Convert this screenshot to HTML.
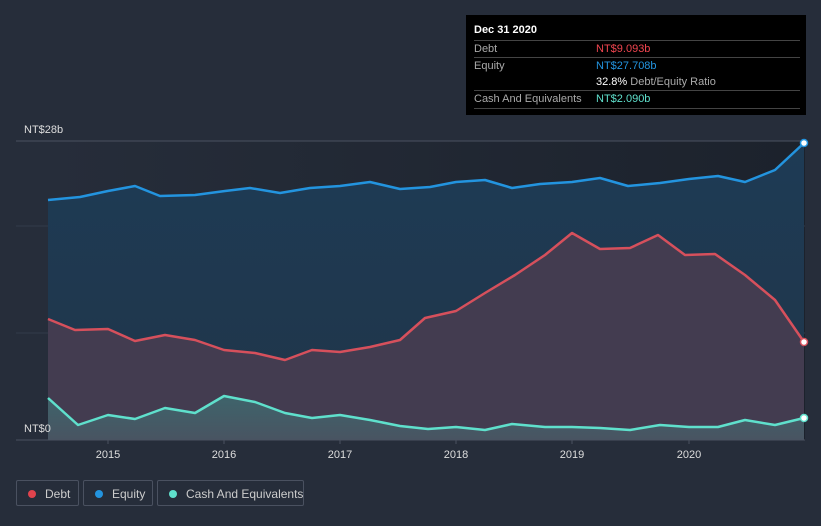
<!DOCTYPE html>
<html><head><style>
body{margin:0;background:#262d3a;font-family:"Liberation Sans",sans-serif;width:821px;height:526px;overflow:hidden;position:relative}
.tt{position:absolute;left:466px;top:15px;width:340px;height:100px;background:#000;color:#fff;font-size:11px}
.tt .r{position:absolute;left:8px;right:6px;border-top:1px solid #444;height:17px;line-height:17px;color:#aaa}
.tt .v{position:absolute;left:122px}
.lg{position:absolute;top:480px;height:26px;border:1px solid #4a5160;border-radius:2px;color:#ccc;font-size:12px;line-height:26px;box-sizing:border-box;white-space:nowrap}
.lg i{position:absolute;left:11px;top:9px;width:8px;height:8px;border-radius:50%}
</style></head><body>
<svg width="821" height="526" style="position:absolute;left:0;top:0">
<defs><linearGradient id="g" x1="0" y1="0" x2="0" y2="1"><stop offset="0" stop-color="#1e3b55"/><stop offset="1" stop-color="#203549"/></linearGradient>
<linearGradient id="bg" x1="0" y1="0" x2="1" y2="0"><stop offset="0" stop-color="#262d3a"/><stop offset="1" stop-color="#1c222c"/></linearGradient>
<linearGradient id="c" x1="0" y1="0" x2="0" y2="1"><stop offset="0" stop-color="#3d6e72"/><stop offset="1" stop-color="#4a5a66"/></linearGradient></defs>
<rect x="48" y="141" width="757" height="299" fill="url(#bg)"/>
<line x1="16" y1="141" x2="805" y2="141" stroke="#4a5160"/>
<line x1="16" y1="226" x2="805" y2="226" stroke="#333c4a"/>
<line x1="16" y1="333" x2="805" y2="333" stroke="#333c4a"/>
<polygon fill="url(#g)" points="48,440 48,200 80,197 108,191 135,186 160,196 195,195 225,191 250,188 280,193 310,188 340,186 370,182 400,189 430,187 456,182 485,180 512,188 540,184 572,182 600,178 628,186 660,183 689,179 718,176 745,182 775,170 804,143 804,440"/>
<polygon fill="#433c50" points="48,440 48,319 75,330 108,329 135,341 165,335 195,340 224,350 255,353 285,360 312,350 340,352 370,347 400,340 425,318 456,311 485,293 515,275 545,255 572,233 600,249 630,248 658,235 685,255 715,254 745,275 775,300 804,342 804,440"/>
<polygon fill="url(#c)" opacity="0.8" points="48,440 48,398 78,425 108,415 135,419 165,408 195,413 224,396 255,402 285,413 312,418 340,415 370,420 400,426 428,429 456,427 485,430 512,424 545,427 572,427 600,428 630,430 660,425 689,427 718,427 745,420 775,425 804,418 804,440"/>
<polyline fill="none" stroke="#2394df" stroke-width="2.5" stroke-linejoin="round" points="48,200 80,197 108,191 135,186 160,196 195,195 225,191 250,188 280,193 310,188 340,186 370,182 400,189 430,187 456,182 485,180 512,188 540,184 572,182 600,178 628,186 660,183 689,179 718,176 745,182 775,170 804,143"/>
<polyline fill="none" stroke="#d6505c" stroke-width="2.5" stroke-linejoin="round" points="48,319 75,330 108,329 135,341 165,335 195,340 224,350 255,353 285,360 312,350 340,352 370,347 400,340 425,318 456,311 485,293 515,275 545,255 572,233 600,249 630,248 658,235 685,255 715,254 745,275 775,300 804,342"/>
<polyline fill="none" stroke="#5fe0cc" stroke-width="2.5" stroke-linejoin="round" points="48,398 78,425 108,415 135,419 165,408 195,413 224,396 255,402 285,413 312,418 340,415 370,420 400,426 428,429 456,427 485,430 512,424 545,427 572,427 600,428 630,430 660,425 689,427 718,427 745,420 775,425 804,418"/>
<circle cx="804" cy="143" r="3.5" fill="#fff" stroke="#2394df" stroke-width="1.5"/>
<circle cx="804" cy="342" r="3.5" fill="#fff" stroke="#d6505c" stroke-width="1.5"/>
<circle cx="804" cy="418" r="3.5" fill="#fff" stroke="#5fe0cc" stroke-width="1.5"/>
<line x1="16" y1="440" x2="805" y2="440" stroke="#4a5160"/>
<g stroke="#4a5160"><line x1="108" y1="440" x2="108" y2="444"/><line x1="224" y1="440" x2="224" y2="444"/><line x1="340" y1="440" x2="340" y2="444"/><line x1="456" y1="440" x2="456" y2="444"/><line x1="572" y1="440" x2="572" y2="444"/><line x1="689" y1="440" x2="689" y2="444"/></g>
<g fill="#ddd" font-size="11" text-anchor="middle"><text x="108" y="458">2015</text><text x="224" y="458">2016</text><text x="340" y="458">2017</text><text x="456" y="458">2018</text><text x="572" y="458">2019</text><text x="689" y="458">2020</text></g>
<text x="24" y="133" fill="#ddd" font-size="11">NT$28b</text>
<text x="24" y="432" fill="#ddd" font-size="11">NT$0</text>
</svg>
<div class="tt">
<div style="position:absolute;left:8px;top:9px;font-weight:bold">Dec 31 2020</div>
<div class="r" style="top:25px">Debt<span class="v" style="color:#f0454f">NT$9.093b</span></div>
<div class="r" style="top:42px">Equity<span class="v" style="color:#2394df">NT$27.708b</span></div>
<div class="r" style="top:59px;border-top:none"><span class="v" style="color:#aaa"><b style="color:#fff;font-weight:normal">32.8%</b> Debt/Equity Ratio</span></div>
<div class="r" style="top:75px;border-bottom:1px solid #444">Cash And Equivalents<span class="v" style="color:#5fe0cc">NT$2.090b</span></div>
</div>
<div class="lg" style="left:16px;width:63px"><i style="background:#e0434d"></i><span style="position:absolute;left:28px">Debt</span></div>
<div class="lg" style="left:83px;width:70px"><i style="background:#2394df"></i><span style="position:absolute;left:28px">Equity</span></div>
<div class="lg" style="left:157px;width:147px"><i style="background:#5fe0cc"></i><span style="position:absolute;left:28px">Cash And Equivalents</span></div>
</body></html>
